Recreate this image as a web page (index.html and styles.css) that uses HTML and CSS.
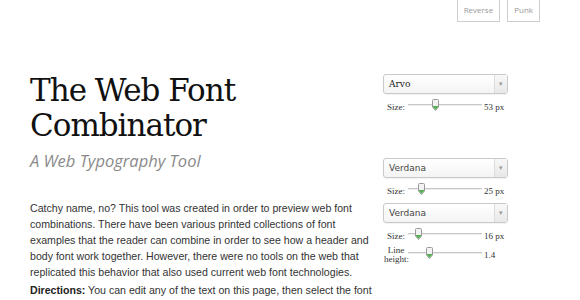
FILE: index.html
```html
<!DOCTYPE html>
<html lang="en">
<head>
  <meta charset="UTF-8">
  <title>The Web Font Combinator</title>
  <link rel="stylesheet" href="styles.css">
</head>
<body>
  <div class="topbar">
    <a class="tab" href="#">Reverse</a>
    <a class="tab" href="#">Punk</a>
  </div>

  <div class="page">
    <div class="content">
      <h1 class="title">The Web Font Combinator</h1>
      <h2 class="subtitle">A Web Typography Tool</h2>
      <p>Catchy name, no? This tool was created in order to preview web font combinations. There have been various printed collections of font examples that the reader can combine in order to see how a header and body font work together. However, there were no tools on the web that replicated this behavior that also used current web font technologies.</p>
      <p><b>Directions:</b> You can edit any of the text on this page, then select the font for the area and it's size, using the menus on the right.</p>
    </div>

    <div class="controls">
      <div class="font-group first">
        <div class="select serif-pick"><span>Arvo</span><i>&#9662;</i></div>
        <div class="slider-row">
          <label>Size:</label>
          <div class="track"><span class="thumb" style="left: 36%"></span></div>
          <span class="value">53 px</span>
        </div>
      </div>

      <div class="font-group second">
        <div class="select"><span>Verdana</span><i>&#9662;</i></div>
        <div class="slider-row">
          <label>Size:</label>
          <div class="track"><span class="thumb" style="left: 17%"></span></div>
          <span class="value">25 px</span>
        </div>
      </div>

      <div class="font-group third">
        <div class="select"><span>Verdana</span><i>&#9662;</i></div>
        <div class="slider-row">
          <label>Size:</label>
          <div class="track"><span class="thumb" style="left: 14%"></span></div>
          <span class="value">16 px</span>
        </div>
        <div class="slider-row tall">
          <label>Line height:</label>
          <div class="track"><span class="thumb" style="left: 28%"></span></div>
          <span class="value">1.4</span>
        </div>
      </div>
    </div>
  </div>
</body>
</html>
```

FILE: styles.css
```css
body {
  margin: 0;
  background: #fff;
  font-family: 'Liberation Sans', Arial, sans-serif;
  color: #333;
  overflow: hidden;
}

/* top right tabs */
.topbar {
  display: flex;
  justify-content: flex-end;
  gap: 7px;
  padding-right: 40px;
}

.tab {
  display: block;
  height: 21px;
  line-height: 20px;
  padding: 0 6px;
  border: 1px solid #cfcfcf;
  border-top: none;
  font-family: 'Open Sans', sans-serif;
  font-size: 8px;
  color: #999;
  text-decoration: none;
}

.page {
  display: flex;
  align-items: flex-start;
  padding-left: 30px;
}

.content {
  width: 343px;
  flex-shrink: 0;
}

.title {
  margin: 51px 0 0;
  font-family: 'DejaVu Serif', serif;
  font-weight: normal;
  font-size: 31px;
  line-height: 35px;
  letter-spacing: -1px;
  color: #111;
}

.subtitle {
  margin: 6px 0 0;
  font-family: 'Open Sans', sans-serif;
  font-style: italic;
  font-weight: normal;
  font-size: 16.5px;
  line-height: 24px;
  color: #8a8a8a;
}

p {
  margin: 27px 0 0;
  font-size: 10.6px;
  line-height: 16px;
}

p + p {
  margin-top: 2px;
}

p b {
  color: #222;
}

/* right hand font pickers */
.controls {
  width: 125px;
  margin-left: 10px;
}

.font-group.first { margin-top: 52px; }
.font-group.second { margin-top: 46px; }
.font-group.third { margin-top: 7px; }

.select {
  display: flex;
  height: 18px;
  border: 1px solid #c9c9c9;
  border-radius: 3px;
  background: linear-gradient(#fff, #f4f4f4);
  box-shadow: 0 1px 1px rgba(0,0,0,0.05);
}

.select span {
  flex: 1;
  padding-left: 5px;
  font-family: 'DejaVu Sans', sans-serif;
  font-size: 9px;
  line-height: 18px;
  color: #444;
}

.select.serif-pick span {
  font-family: 'DejaVu Serif', serif;
  color: #222;
}

.select i {
  width: 12px;
  border-left: 1px solid #ddd;
  background: linear-gradient(#f8f8f8, #e8e8e8);
  font-style: normal;
  font-size: 7px;
  line-height: 18px;
  text-align: center;
  color: #999;
}

.slider-row {
  display: grid;
  grid-template-columns: 24px 74px 1fr;
  align-items: center;
  height: 14px;
  margin-top: 4px;
  padding-left: 1px;
  font-family: 'Liberation Serif', serif;
  font-size: 9px;
  color: #333;
}

.slider-row.tall {
  height: 22px;
  margin-top: 1px;
}

.slider-row label {
  text-align: center;
  line-height: 9px;
  padding-top: 4px;
}

.slider-row .value {
  padding: 4px 0 0 2px;
}

.track {
  position: relative;
  height: 1px;
  background: #c8c8c8;
  border-bottom: 1px solid #eee;
}

.thumb {
  position: absolute;
  top: -5px;
  width: 7px;
  height: 12px;
  margin-left: -3px;
  background: url("data:image/svg+xml,%3Csvg xmlns='http://www.w3.org/2000/svg' width='7' height='12'%3E%3Cpath d='M0.5 1.5Q0.5 0.5 1.5 0.5H5.5Q6.5 0.5 6.5 1.5V8L3.5 11.5L0.5 8Z' fill='%23f2f2f2' stroke='%23999'/%3E%3Cpath d='M1 7H6V8L3.5 10.8L1 8Z' fill='%2355b055'/%3E%3C/svg%3E") no-repeat;
}
```
